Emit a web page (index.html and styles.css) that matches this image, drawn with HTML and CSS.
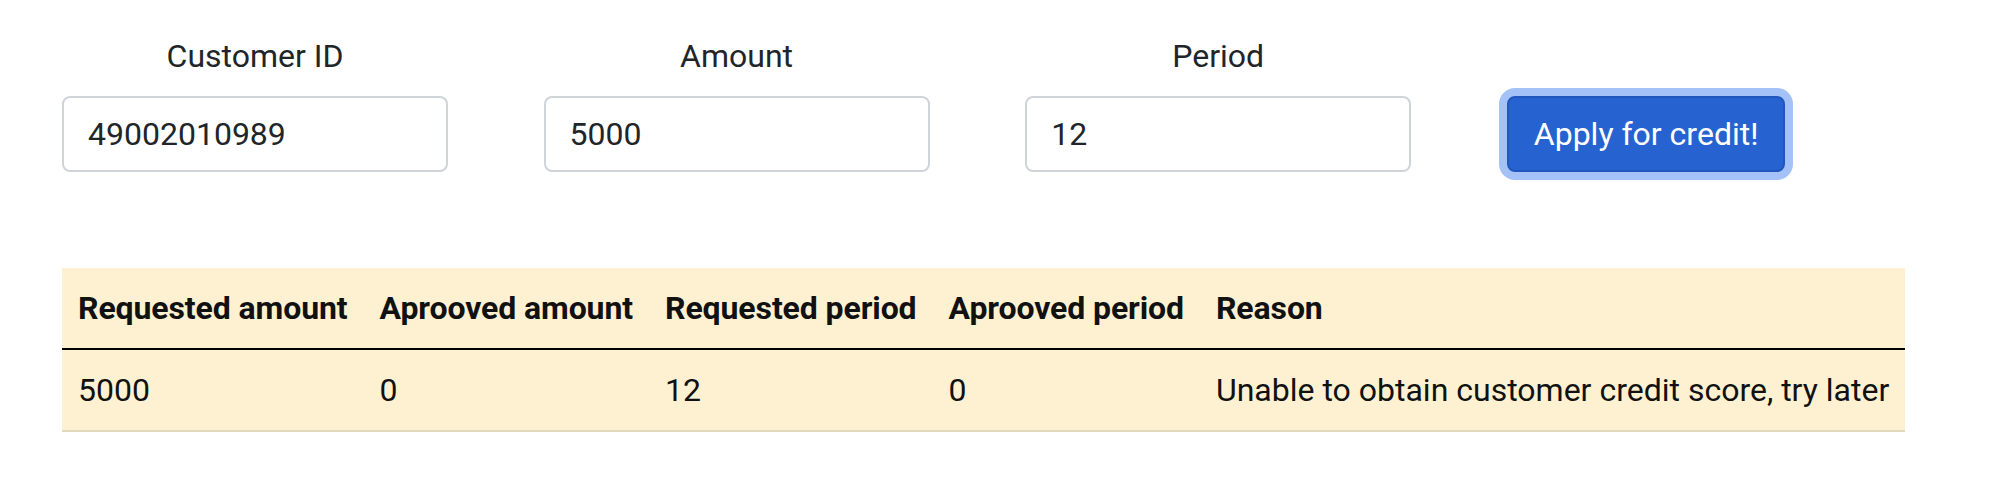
FILE: index.html
```html
<!DOCTYPE html>
<html lang="en">
<head>
<meta charset="utf-8">
<title>Credit application</title>
<link rel="stylesheet" href="styles.css">
</head>
<body>
<main class="page">
  <form class="form-row">
    <div class="field">
      <label class="field-label" for="cid">Customer ID</label>
      <input class="field-input" id="cid" type="text" value="49002010989">
    </div>
    <div class="field">
      <label class="field-label" for="amount">Amount</label>
      <input class="field-input" id="amount" type="text" value="5000">
    </div>
    <div class="field">
      <label class="field-label" for="period">Period</label>
      <input class="field-input" id="period" type="text" value="12">
    </div>
    <div class="action">
      <button class="btn-apply" type="button">Apply for credit!</button>
    </div>
  </form>

  <table class="result">
    <thead>
      <tr>
        <th>Requested amount</th>
        <th>Aprooved amount</th>
        <th>Requested period</th>
        <th>Aprooved period</th>
        <th>Reason</th>
      </tr>
    </thead>
    <tbody>
      <tr>
        <td>5000</td>
        <td>0</td>
        <td>12</td>
        <td>0</td>
        <td>Unable to obtain customer credit score, try later</td>
      </tr>
    </tbody>
  </table>
</main>
</body>
</html>
```

FILE: styles.css
```css
html, body {
  margin: 0;
  padding: 0;
  background: #ffffff;
}

body {
  font-family: Roboto, "Liberation Sans", sans-serif;
  font-size: 32px;
  line-height: 48px;
  color: #212529;
}

.page {
  padding: 32px 62px;
}

.form-row {
  display: flex;
  align-items: flex-end;
  gap: 95.6px;
  margin: 0;
}

.field {
  width: 386px;
  display: flex;
  flex-direction: column;
  align-items: center;
}

.field-label {
  margin-bottom: 16px;
  color: #212529;
}

.field-input {
  box-sizing: border-box;
  width: 100%;
  height: 76px;
  padding: 12px 24px;
  border: 2px solid #ced4da;
  border-radius: 8px;
  font-family: Roboto, "Liberation Sans", sans-serif;
  font-size: 32px;
  line-height: 48px;
  color: #212529;
  background: #ffffff;
  outline: none;
}

.action {
  display: flex;
}

.btn-apply {
  box-sizing: border-box;
  height: 76px;
  padding: 12px 25px;
  border: 2px solid #2157bd;
  border-radius: 8px;
  background: #2662d0;
  color: #ffffff;
  font-family: Roboto, "Liberation Sans", sans-serif;
  font-size: 32px;
  line-height: 48px;
  box-shadow: 0 0 0 8px #a4c2f7;
  cursor: pointer;
}

.result {
  margin-top: 96px;
  border-collapse: separate;
  border-spacing: 0;
  background: #fdf1d1;
  color: #111111;
  text-align: left;
}

.result th,
.result td {
  padding: 16px;
  line-height: 48px;
  white-space: nowrap;
}

.result th {
  font-weight: 700;
  letter-spacing: -0.1px;
  border-bottom: 2px solid #000000;
}

.result td {
  font-weight: 400;
  border-bottom: 2px solid #e2d9bd;
}
```
